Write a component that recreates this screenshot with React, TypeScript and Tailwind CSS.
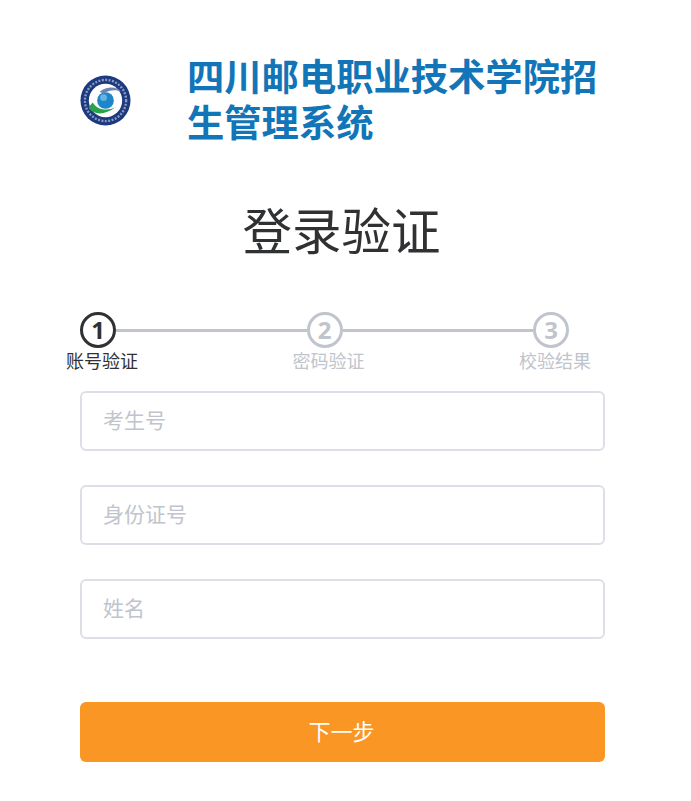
import React from "react";

const cjk = "font-['Open_Sans','Noto_Sans_CJK_SC',sans-serif]";

function Logo() {
  return (
    <svg width="51" height="51" viewBox="0 0 52 52" className="shrink-0">
      <circle cx="26" cy="26" r="25.5" fill="#1d3a7f" />
      <circle cx="26" cy="26" r="21" fill="none" stroke="#8c9cc4" strokeWidth="2.4" strokeDasharray="2 1.5" />
      <circle cx="26" cy="26" r="17" fill="#fff" />
      <path d="M9 34 C 14 41, 26 41, 36 33 C 28 37, 18 36, 13 28 C 11 30, 9 32, 9 34 Z" fill="#2aa24a" />
      <circle cx="26" cy="26" r="8.5" fill="#1f86c9" />
      <circle cx="24" cy="23" r="3.5" fill="#63b5e3" />
      <path d="M20 17 C 28 11, 38 12, 42 17 C 37 14.5, 30 15, 24 19 Z" fill="#6f84b5" />
    </svg>
  );
}

function Step({ n, active }: { n: number; active?: boolean }) {
  return (
    <div
      className={`w-9 h-9 shrink-0 rounded-full border-[3px] flex items-center justify-center text-[24px] font-bold leading-none ${
        active ? "border-[#303133] text-[#303133]" : "border-[#c0c4cc] text-[#c0c4cc]"
      }`}
    >
      {n}
    </div>
  );
}

function Field({ placeholder }: { placeholder: string }) {
  return (
    <input
      placeholder={placeholder}
      className="block w-full h-[60px] rounded-md border-2 border-[#dcdfe6] bg-white pl-[21px] pr-[22px] pb-[2px] text-[21px] text-[#606266] outline-none placeholder:text-[#c0c4cc]"
    />
  );
}

export default function App() {
  return (
    <div className={`min-h-[801px] bg-white px-20 w-[685px] ${cjk}`}>
      <div className="flex items-center pt-[54px]">
        <div className="w-[107px] shrink-0">
          <Logo />
        </div>
        <h1 className="text-[37.3px] leading-[46px] font-bold text-[#1275b8]">四川邮电职业技术学院招生管理系统</h1>
      </div>

      <h2 className="mt-[49px] text-center text-[49.5px] leading-[72px] text-[#303133] pr-[2px]">登录验证</h2>

      <div className="mt-[45px] mr-9 flex items-center">
        <Step n={1} active />
        <div className="h-[3px] flex-1 bg-[#c0c4cc]" />
        <Step n={2} />
        <div className="h-[3px] flex-1 bg-[#c0c4cc]" />
        <Step n={3} />
      </div>
      <div className="-ml-[14px] mr-[14px] flex justify-between text-lg leading-[26px] w-[525px]">
        <span className="text-[#303133]">账号验证</span>
        <span className="text-[#c0c4cc]">密码验证</span>
        <span className="text-[#c0c4cc]">校验结果</span>
      </div>

      <div className="mt-[17px] flex flex-col gap-[34px]">
        <Field placeholder="考生号" />
        <Field placeholder="身份证号" />
        <Field placeholder="姓名" />
      </div>

      <button className="mt-[63px] block w-full h-[60px] rounded-md bg-[#fa9623] pb-[2px] pr-[2px] text-[22px] text-white">下一步</button>
    </div>
  );
}
